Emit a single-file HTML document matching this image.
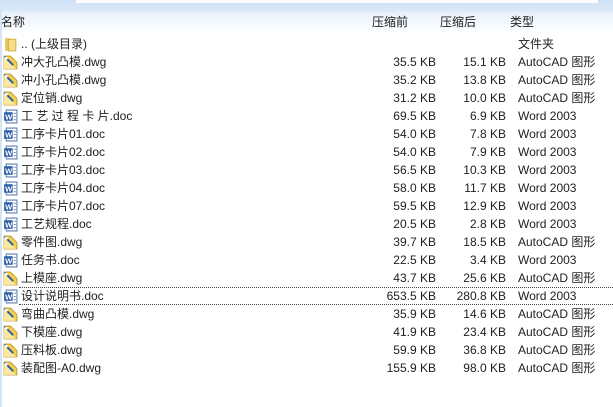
<html><head><style>
body{margin:0;width:613px;height:407px;overflow:hidden;background:#fff;font-family:"Liberation Sans","Noto Sans CJK SC",sans-serif;font-size:12px;color:#1e1e1e;position:relative}
.top{position:absolute;left:0;top:0;width:613px;height:34px;background:linear-gradient(#cfe1f5 0,#d9e8f8 10px,#eaf3fc 14px,#fff 34px)}
.tw{position:absolute;left:76px;top:0;width:522px;height:3px;background:#fafcff}
.lb{position:absolute;left:0;top:0;width:2px;height:407px;background:#d6e5f5}
.h{position:absolute;top:13px}
.r{position:absolute;left:0;width:613px;height:18px;line-height:18px}
.n{position:absolute;left:21px}
.s{position:absolute;right:177px}
.c{position:absolute;right:107px}
.t{position:absolute;left:518px}
.ic{position:absolute;left:3px;top:2px;width:15px;height:15px}
.sel{border-top:1px dotted #444;border-bottom:1px dotted #444;left:19px;width:594px;height:16px;line-height:16px}
.sel .n{left:2px}.sel .ic{left:-16px;top:1px}
</style></head><body>
<div class="top"><div class="tw"></div></div>
<div class="lb"></div>
<div class="h" style="left:1px">名称</div>
<div class="h" style="left:372px">压缩前</div>
<div class="h" style="left:440px">压缩后</div>
<div class="h" style="left:510px">类型</div>
<svg width="0" height="0" style="position:absolute"><defs>
<symbol id="f" viewBox="0 0 14 14"><path d="M2 1h4v12H2z" fill="#e7c65a"/><path d="M5 2h7v11H5z" fill="#f5dd8a" stroke="#d2a93a" stroke-width=".8"/></symbol>
<symbol id="d" viewBox="0 0 14 14"><path d="M1 1h6l6 6v6H1z" fill="#f3cf4a" stroke="#b8942a" stroke-width=".8"/><path d="M1 1l11 12H1z" fill="#fbe9a0"/><path d="M1.5 1.5l8 8" stroke="#2a5fa8" stroke-width="1.8"/><circle cx="3" cy="3" r="1.4" fill="#fff"/></symbol>
<symbol id="w" viewBox="0 0 14 14"><path d="M3 1h10v12H3z" fill="#fff" stroke="#5a7fb8"/><path d="M1 3h8v8H1z" fill="#2f5ea8"/><text x="2" y="10" font-size="7" fill="#fff" font-family="Liberation Sans" font-weight="bold">W</text><path d="M10 4h2M10 7h2M10 10h2" stroke="#7a9ac8"/></symbol>
</defs></svg>
<div class="r" style="top:35px"><svg class="ic"><use href="#f"/></svg><span class="n">.. (上级目录)</span><span class="t">文件夹</span></div>
<div class="r" style="top:53px"><svg class="ic"><use href="#d"/></svg><span class="n">冲大孔凸模.dwg</span><span class="s">35.5 KB</span><span class="c">15.1 KB</span><span class="t">AutoCAD 图形</span></div>
<div class="r" style="top:71px"><svg class="ic"><use href="#d"/></svg><span class="n">冲小孔凸模.dwg</span><span class="s">35.2 KB</span><span class="c">13.8 KB</span><span class="t">AutoCAD 图形</span></div>
<div class="r" style="top:89px"><svg class="ic"><use href="#d"/></svg><span class="n">定位销.dwg</span><span class="s">31.2 KB</span><span class="c">10.0 KB</span><span class="t">AutoCAD 图形</span></div>
<div class="r" style="top:107px"><svg class="ic"><use href="#w"/></svg><span class="n">工 艺 过 程 卡 片.doc</span><span class="s">69.5 KB</span><span class="c">6.9 KB</span><span class="t">Word 2003</span></div>
<div class="r" style="top:125px"><svg class="ic"><use href="#w"/></svg><span class="n">工序卡片01.doc</span><span class="s">54.0 KB</span><span class="c">7.8 KB</span><span class="t">Word 2003</span></div>
<div class="r" style="top:143px"><svg class="ic"><use href="#w"/></svg><span class="n">工序卡片02.doc</span><span class="s">54.0 KB</span><span class="c">7.9 KB</span><span class="t">Word 2003</span></div>
<div class="r" style="top:161px"><svg class="ic"><use href="#w"/></svg><span class="n">工序卡片03.doc</span><span class="s">56.5 KB</span><span class="c">10.3 KB</span><span class="t">Word 2003</span></div>
<div class="r" style="top:179px"><svg class="ic"><use href="#w"/></svg><span class="n">工序卡片04.doc</span><span class="s">58.0 KB</span><span class="c">11.7 KB</span><span class="t">Word 2003</span></div>
<div class="r" style="top:197px"><svg class="ic"><use href="#w"/></svg><span class="n">工序卡片07.doc</span><span class="s">59.5 KB</span><span class="c">12.9 KB</span><span class="t">Word 2003</span></div>
<div class="r" style="top:215px"><svg class="ic"><use href="#w"/></svg><span class="n">工艺规程.doc</span><span class="s">20.5 KB</span><span class="c">2.8 KB</span><span class="t">Word 2003</span></div>
<div class="r" style="top:233px"><svg class="ic"><use href="#d"/></svg><span class="n">零件图.dwg</span><span class="s">39.7 KB</span><span class="c">18.5 KB</span><span class="t">AutoCAD 图形</span></div>
<div class="r" style="top:251px"><svg class="ic"><use href="#w"/></svg><span class="n">任务书.doc</span><span class="s">22.5 KB</span><span class="c">3.4 KB</span><span class="t">Word 2003</span></div>
<div class="r" style="top:269px"><svg class="ic"><use href="#d"/></svg><span class="n">上模座.dwg</span><span class="s">43.7 KB</span><span class="c">25.6 KB</span><span class="t">AutoCAD 图形</span></div>
<div class="r sel" style="top:287px"><svg class="ic"><use href="#w"/></svg><span class="n">设计说明书.doc</span><span class="s" style="right:177px">653.5 KB</span><span class="c">280.8 KB</span><span class="t" style="left:499px">Word 2003</span></div>
<div class="r" style="top:305px"><svg class="ic"><use href="#d"/></svg><span class="n">弯曲凸模.dwg</span><span class="s">35.9 KB</span><span class="c">14.6 KB</span><span class="t">AutoCAD 图形</span></div>
<div class="r" style="top:323px"><svg class="ic"><use href="#d"/></svg><span class="n">下模座.dwg</span><span class="s">41.9 KB</span><span class="c">23.4 KB</span><span class="t">AutoCAD 图形</span></div>
<div class="r" style="top:341px"><svg class="ic"><use href="#d"/></svg><span class="n">压料板.dwg</span><span class="s">59.9 KB</span><span class="c">36.8 KB</span><span class="t">AutoCAD 图形</span></div>
<div class="r" style="top:359px"><svg class="ic"><use href="#d"/></svg><span class="n">装配图-A0.dwg</span><span class="s">155.9 KB</span><span class="c">98.0 KB</span><span class="t">AutoCAD 图形</span></div>
</body></html>
